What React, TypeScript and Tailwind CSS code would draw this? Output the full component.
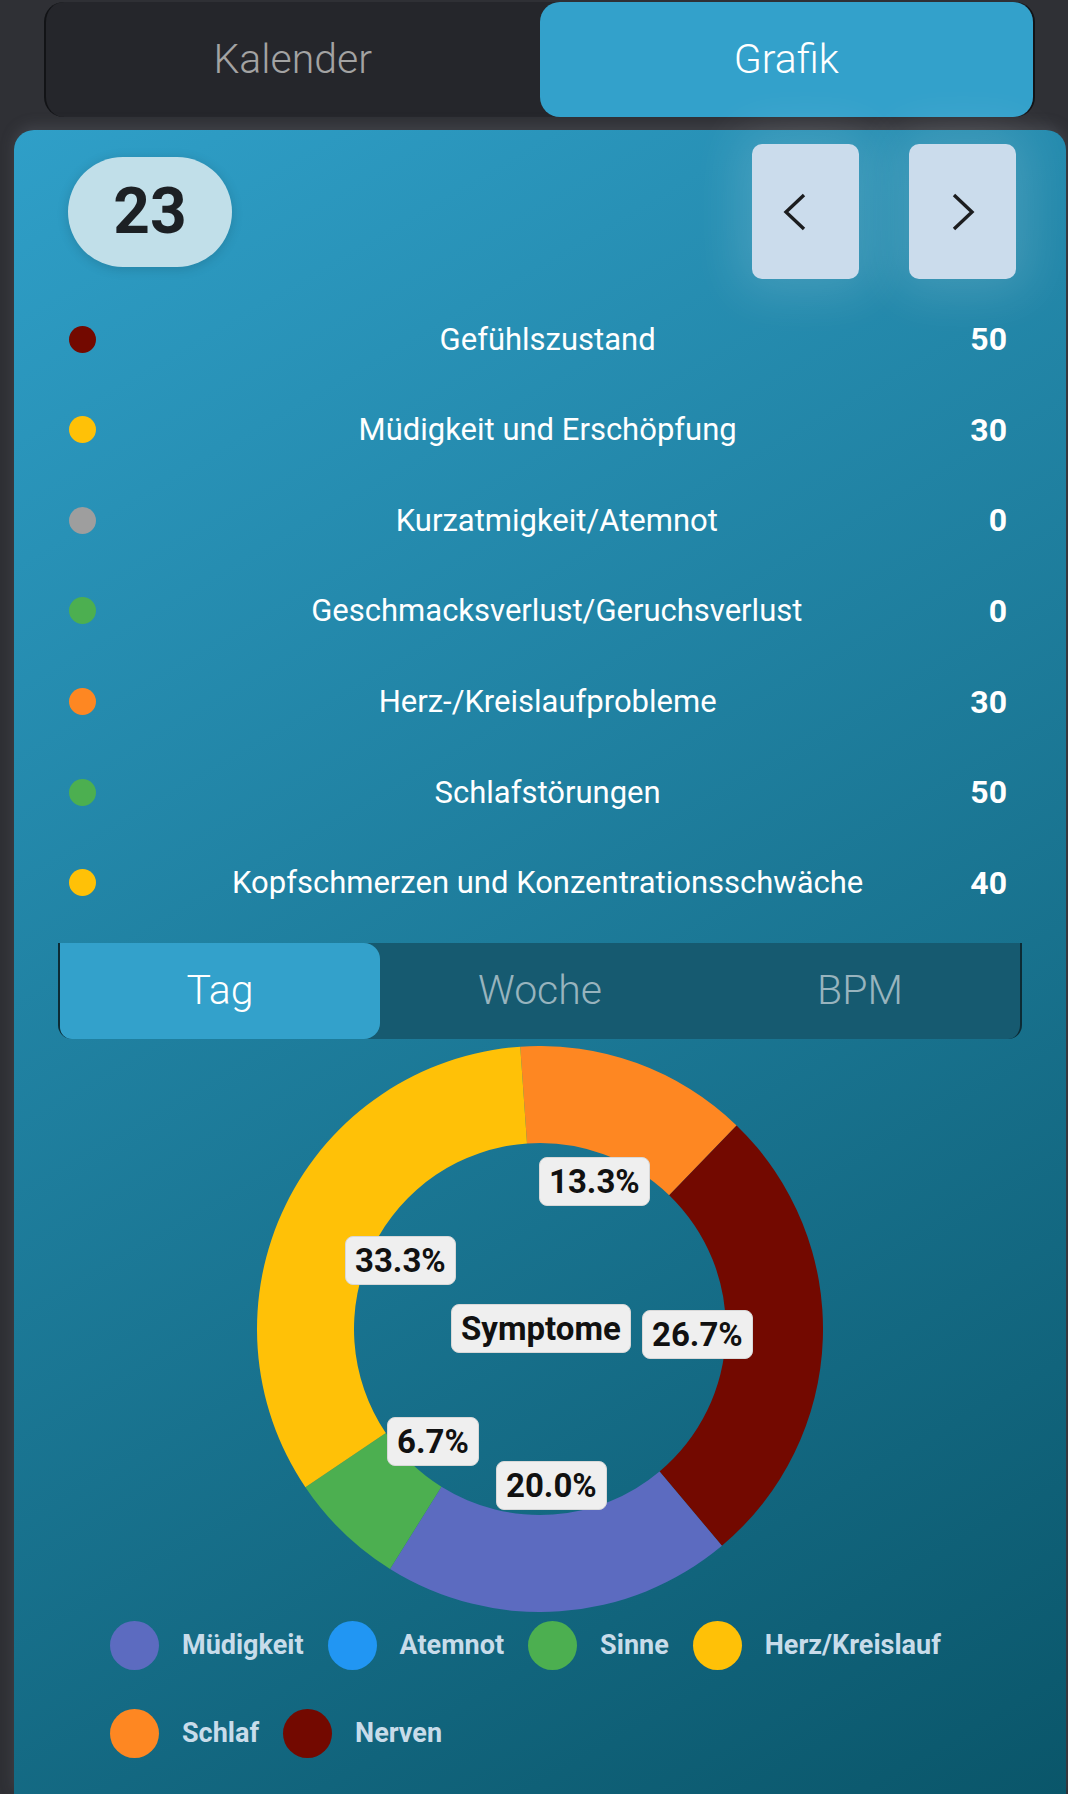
import React from "react";

const rows = [
  { label: "Gefühlszustand", value: "50", dot: "bg-[#730900]" },
  { label: "Müdigkeit und Erschöpfung", value: "30", dot: "bg-[#ffc107]" },
  { label: "Kurzatmigkeit/Atemnot", value: "0", dot: "bg-[#9e9e9e]" },
  { label: "Geschmacksverlust/Geruchsverlust", value: "0", dot: "bg-[#4caf50]" },
  { label: "Herz-/Kreislaufprobleme", value: "30", dot: "bg-[#fe8722]" },
  { label: "Schlafstörungen", value: "50", dot: "bg-[#4caf50]" },
  { label: "Kopfschmerzen und Konzentrationsschwäche", value: "40", dot: "bg-[#ffc107]" },
];

const segments = [
  { color: "#fe8722", a0: -4, a1: 44 },
  { color: "#730900", a0: 44, a1: 140 },
  { color: "#5c6bc0", a0: 140, a1: 212 },
  { color: "#4caf50", a0: 212, a1: 236 },
  { color: "#ffc107", a0: 236, a1: 356 },
];

const legend = [
  { label: "Müdigkeit", dot: "bg-[#5c6bc0]" },
  { label: "Atemnot", dot: "bg-[#2196f3]" },
  { label: "Sinne", dot: "bg-[#4caf50]" },
  { label: "Herz/Kreislauf", dot: "bg-[#ffc107]" },
  { label: "Schlaf", dot: "bg-[#fe8722]" },
  { label: "Nerven", dot: "bg-[#730900]" },
];

const chartLabels = [
  { text: "13.3%", pos: "left-[282px] top-[111px]" },
  { text: "33.3%", pos: "left-[88px] top-[190px]" },
  { text: "Symptome", pos: "left-[194px] top-[258px]" },
  { text: "26.7%", pos: "left-[385px] top-[264px]" },
  { text: "6.7%", pos: "left-[130px] top-[371px]" },
  { text: "20.0%", pos: "left-[239px] top-[415px]" },
];

function pt(c: number, r: number, a: number) {
  const rad = (a * Math.PI) / 180;
  return [c + r * Math.sin(rad), c - r * Math.cos(rad)];
}

function arcPath(c: number, r1: number, r2: number, a0: number, a1: number) {
  const large = a1 - a0 > 180 ? 1 : 0;
  const [x0, y0] = pt(c, r2, a0);
  const [x1, y1] = pt(c, r2, a1);
  const [x2, y2] = pt(c, r1, a1);
  const [x3, y3] = pt(c, r1, a0);
  return `M ${x0} ${y0} A ${r2} ${r2} 0 ${large} 1 ${x1} ${y1} L ${x2} ${y2} A ${r1} ${r1} 0 ${large} 0 ${x3} ${y3} Z`;
}

function Chevron({ dir }: { dir: "left" | "right" }) {
  return (
    <svg width="24" height="38" viewBox="0 0 24 38" fill="none">
      <polyline
        points={dir === "left" ? "21,2 3,19 21,36" : "3,2 21,19 3,36"}
        stroke="#1c1d1f"
        strokeWidth="3.4"
        strokeLinecap="butt"
        strokeLinejoin="miter"
      />
    </svg>
  );
}

export default function App() {
  return (
    <div className="w-full min-h-[1794px] bg-[#2f3035] font-['Roboto',_'Noto_Sans',_sans-serif] overflow-hidden">
      {/* top tabs */}
      <div className="ml-[44px] mr-[33px] mt-[2px] h-[115px] flex rounded-[20px] bg-[#25262b] border-x-2 border-[#121316]">
        <div className="flex-1 flex items-center justify-center text-[41px] font-light text-[#a3a3a3]">
          Kalender
        </div>
        <div className="flex-1 flex items-center justify-center text-[41px] font-light text-white bg-[#33a1cb] rounded-[20px]">
          Grafik
        </div>
      </div>

      {/* card */}
      <div className="ml-[14px] mr-[2px] mt-[13px] min-h-[1664px] rounded-t-[20px] bg-[linear-gradient(150deg,#2f9fc8_0%,#0a566a_100%)] shadow-[0_-4px_14px_rgba(120,125,135,0.25)]">
        {/* header */}
        <div className="flex items-start justify-between pt-[14px] pl-[54px] pr-[50px]">
          <div className="mt-[13px] w-[164px] h-[110px] rounded-full bg-[#c1dfe9] flex items-center justify-center shadow-[0_2px_12px_rgba(0,0,0,0.15)]">
            <span className="text-[64px] font-bold text-[#1c2024] leading-none">23</span>
          </div>
          <div className="flex gap-[50px]">
            <button className="w-[107px] h-[135px] rounded-[10px] bg-[#cbdcec] flex items-center justify-center pr-[22px] shadow-[0_0_50px_14px_rgba(255,255,255,0.14)]">
              <Chevron dir="left" />
            </button>
            <button className="w-[107px] h-[135px] rounded-[10px] bg-[#cbdcec] flex items-center justify-center shadow-[0_0_50px_14px_rgba(255,255,255,0.14)]">
              <Chevron dir="right" />
            </button>
          </div>
        </div>

        {/* rows */}
        <div className="mt-[14.7px]">
          {rows.map((r) => (
            <div key={r.label} className="flex items-center h-[90.67px] pl-[55px] pr-[59px]">
              <span className={`w-[27px] h-[27px] rounded-full shrink-0 ${r.dot}`} />
              <span className="flex-1 ml-[29px] text-center text-[31px] text-white leading-none">
                {r.label}
              </span>
              <span className="text-[32px] font-bold text-white leading-none">{r.value}</span>
            </div>
          ))}
        </div>

        {/* sub tabs */}
        <div className="mx-[44px] mt-[14.7px] h-[96px] flex bg-[#165a70] border-x-2 border-[#0c2b35] rounded-b-[14px]">
          <div className="flex-1 flex items-center justify-center text-[41px] font-light text-white bg-[#33a1cb] rounded-r-[16px] rounded-bl-[12px]">
            Tag
          </div>
          <div className="flex-1 flex items-center justify-center text-[41px] font-light text-[#98b4be]">
            Woche
          </div>
          <div className="flex-1 flex items-center justify-center text-[41px] font-light text-[#98b4be]">
            BPM
          </div>
        </div>

        {/* donut */}
        <div className="relative w-[566px] h-[566px] mx-auto mt-[7px]">
          <svg width="566" height="566" viewBox="0 0 566 566">
            {segments.map((s) => (
              <path key={s.color} d={arcPath(283, 186, 283, s.a0, s.a1)} fill={s.color} />
            ))}
          </svg>
          {chartLabels.map((l) => (
            <div
              key={l.text}
              className={`absolute ${l.pos} h-[49px] px-[9px] flex items-center rounded-[8px] bg-[#efefef] border border-[#d8d8d8] text-[33px] font-bold text-[#111] leading-none`}
            >
              {l.text}
            </div>
          ))}
        </div>

        {/* legend */}
        <div className="mt-[9.5px] pl-[96px] pr-[44px] flex flex-wrap gap-x-[24px] gap-y-[39px]">
          {legend.map((l) => (
            <div key={l.label} className="flex items-center gap-[23px]">
              <span className={`w-[49px] h-[49px] rounded-full ${l.dot}`} />
              <span className="text-[27px] font-bold text-[#c8dcea] leading-none">{l.label}</span>
            </div>
          ))}
        </div>
      </div>
    </div>
  );
}
